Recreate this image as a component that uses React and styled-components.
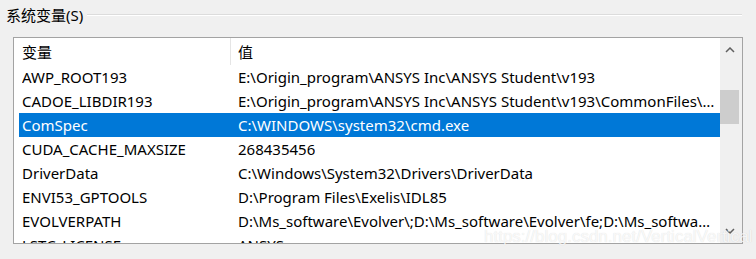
import styled, { createGlobalStyle } from "styled-components";

const GlobalStyle = createGlobalStyle`
    body {
        margin: 0;
        background: #f0f0f0;
        font-family: "Noto Sans", "Noto Sans CJK SC", sans-serif;
        color: #000;
    }
`;

const ROWS = [
    { name: "AWP_ROOT193", value: "E:\\Origin_program\\ANSYS Inc\\ANSYS Student\\v193" },
    { name: "CADOE_LIBDIR193", value: "E:\\Origin_program\\ANSYS Inc\\ANSYS Student\\v193\\CommonFiles\\Language\\en-us" },
    { name: "ComSpec", value: "C:\\WINDOWS\\system32\\cmd.exe", selected: true },
    { name: "CUDA_CACHE_MAXSIZE", value: "268435456" },
    { name: "DriverData", value: "C:\\Windows\\System32\\Drivers\\DriverData" },
    { name: "ENVI53_GPTOOLS", value: "D:\\Program Files\\Exelis\\IDL85" },
    { name: "EVOLVERPATH", value: "D:\\Ms_software\\Evolver\\;D:\\Ms_software\\Evolver\\fe;D:\\Ms_software\\Evolver\\fe2" },
    { name: "LSTC_LICENSE", value: "ANSYS" },
];

const Page = styled.div`
    position: relative;
    width: 756px;
    height: 259px;
    overflow: hidden;
`;

const GroupHeader = styled.div`
    display: flex;
    align-items: center;
    height: 30px;
    padding-left: 6px;
`;

const GroupLabel = styled.span`
    font-size: 15px;
    line-height: 20px;
    white-space: nowrap;
`;

const GroupLine = styled.div`
    flex: 1;
    margin: 0 14px 0 4px;
    border-top: 1px solid #dcdcdc;
    border-bottom: 1px solid #ffffff;
`;

const ListBox = styled.div`
    display: flex;
    margin: 7px 0 0 13px;
    width: 730px;
    height: 207px;
    box-sizing: border-box;
    border: 1px solid #a3a3a3;
    background: #fff;
`;

const Table = styled.div`
    flex: 1;
    min-width: 0;
    overflow: hidden;
`;

const Row = styled.div`
    display: grid;
    grid-template-columns: 212px 1fr;
    margin-left: 5px;
    height: ${(p) => (p.$header ? "27px" : "24px")};
    align-items: center;
    font-size: 15px;
    background: ${(p) => (p.$selected ? "#0078d7" : "transparent")};
    color: ${(p) => (p.$selected ? "#fff" : "#000")};
`;

const Cell = styled.div`
    height: 100%;
    display: flex;
    align-items: center;
    padding-left: ${(p) => (p.$first ? "3px" : "7px")};
    padding-right: 5px;
    min-width: 0;
    box-sizing: border-box;
    border-right: ${(p) => (p.$divider ? "1px solid #e5e5e5" : "none")};
`;

const CellText = styled.span`
    white-space: nowrap;
    overflow: hidden;
    text-overflow: ellipsis;
`;

const Scrollbar = styled.div`
    width: 22px;
    display: flex;
    flex-direction: column;
    background: #f0f0f0;
`;

const ArrowButton = styled.div`
    height: 24px;
    display: flex;
    align-items: center;
    justify-content: center;
    padding-right: 3px;
`;

const Track = styled.div`
    flex: 1;
    padding-top: 28px;
`;

const Thumb = styled.div`
    width: 19px;
    height: 34px;
    background: #cdcdcd;
`;

const Watermark = styled.div`
    position: absolute;
    left: 484px;
    top: 227px;
    font-family: "Liberation Sans", sans-serif;
    font-size: 17px;
    color: rgba(255, 255, 255, 0.8);
    text-shadow: 0 0 1px rgba(0, 0, 0, 0.15);
    white-space: nowrap;
    pointer-events: none;
`;

function Chevron({ down }) {
    return (
        <svg width="10" height="6" viewBox="0 0 10 6">
            <path
                d={down ? "M1 1 L5 5 L9 1" : "M1 5 L5 1 L9 5"}
                fill="none"
                stroke="#606060"
                strokeWidth="1.5"
            />
        </svg>
    );
}

export default function App() {
    return (
        <Page>
            <GlobalStyle />
            <GroupHeader>
                <GroupLabel>系统变量(S)</GroupLabel>
                <GroupLine />
            </GroupHeader>
            <ListBox>
                <Table>
                    <Row $header>
                        <Cell $first $divider>
                            <CellText>变量</CellText>
                        </Cell>
                        <Cell>
                            <CellText>值</CellText>
                        </Cell>
                    </Row>
                    {ROWS.map((r) => (
                        <Row key={r.name} $selected={r.selected}>
                            <Cell $first>
                                <CellText>{r.name}</CellText>
                            </Cell>
                            <Cell>
                                <CellText>{r.value}</CellText>
                            </Cell>
                        </Row>
                    ))}
                </Table>
                <Scrollbar>
                    <ArrowButton>
                        <Chevron />
                    </ArrowButton>
                    <Track>
                        <Thumb />
                    </Track>
                    <ArrowButton>
                        <Chevron down />
                    </ArrowButton>
                </Scrollbar>
            </ListBox>
            <Watermark>https://blog.csdn.net/VerticalVertical</Watermark>
        </Page>
    );
}
